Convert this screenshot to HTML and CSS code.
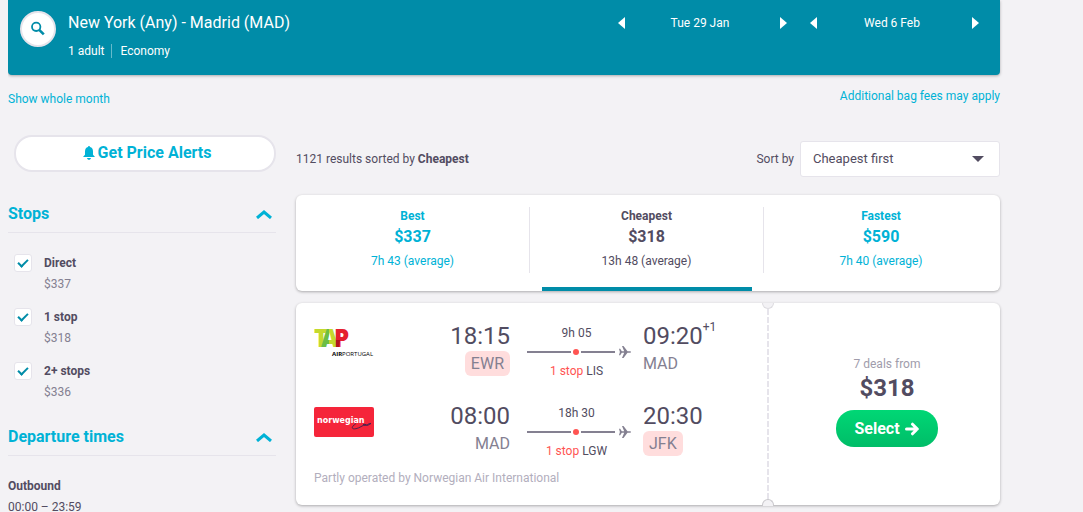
FILE: index.html
```html
<!DOCTYPE html>
<html lang="en">
<head>
    <meta charset="UTF-8">
    <meta name="viewport" content="width=device-width, initial-scale=1.0">
    <title>New York (Any) - Madrid (MAD)</title>
    <link rel="stylesheet" href="styles.css">
</head>
<body>
    <div class="page">
        <header class="search-bar">
            <button class="search-button" type="button" aria-label="Edit search">
                <svg width="18" height="18" viewBox="0 0 18 18" fill="none" stroke="currentColor">
                    <circle cx="7.2" cy="6.8" r="4.2" stroke-width="1.8"/>
                    <path d="M10.2 9.8l4.6 4.6" stroke-width="2.6"/>
                </svg>
            </button>
            <div class="search-summary">
                <h1>New York (Any) - Madrid (MAD)</h1>
                <p><span>1 adult</span><span class="cabin">Economy</span></p>
            </div>
            <div class="dates">
                <div class="date">
                    <button type="button" aria-label="Previous departure day"><svg width="18" height="18" viewBox="0 0 18 18"><path d="M13 3v12L6 9z"/></svg></button>
                    <span>Tue 29 Jan</span>
                    <button type="button" aria-label="Next departure day"><svg width="18" height="18" viewBox="0 0 18 18"><path d="M10 3v12l7-6z"/></svg></button>
                </div>
                <div class="date">
                    <button type="button" aria-label="Previous return day"><svg width="18" height="18" viewBox="0 0 18 18"><path d="M13 3v12L6 9z"/></svg></button>
                    <span>Wed 6 Feb</span>
                    <button type="button" aria-label="Next return day"><svg width="18" height="18" viewBox="0 0 18 18"><path d="M10 3v12l7-6z"/></svg></button>
                </div>
            </div>
        </header>

        <div class="links">
            <a class="month-link" href="#">Show whole month</a>
            <a href="#">Additional bag fees may apply</a>
        </div>

        <div class="columns">
            <aside class="sidebar">
                <button class="alerts" type="button">
                    <svg width="12" height="14" viewBox="0 0 12 14" fill="currentColor"><path d="M6 0a1 1 0 0 1 1 1.1C9 1.6 10 3.300 10 5.500v3.300l2 2.200H0l2-2.200V5.500C2 3.300 3 1.600 5 1.100A1 1 0 0 1 6 0zM4 12h4c-.2 1.200-1 1.800-2 1.800S4.200 13.200 4 12z"/></svg>
                    Get Price Alerts
                </button>

                <section class="filter">
                    <h2>
                        <button type="button">Stops
                            <svg width="16" height="10" viewBox="0 0 16 10"><path d="M1 9l7-6 7 6"/></svg>
                        </button>
                    </h2>
                    <div class="options">
                        <div class="option">
                            <input type="checkbox" id="direct" checked>
                            <label for="direct">Direct <span>$337</span></label>
                        </div>
                        <div class="option">
                            <input type="checkbox" id="one-stop" checked>
                            <label for="one-stop">1 stop <span>$318</span></label>
                        </div>
                        <div class="option">
                            <input type="checkbox" id="two-stops" checked>
                            <label for="two-stops">2+ stops <span>$336</span></label>
                        </div>
                    </div>
                </section>

                <section class="filter">
                    <h2>
                        <button type="button">Departure times
                            <svg width="16" height="10" viewBox="0 0 16 10"><path d="M1 9l7-6 7 6"/></svg>
                        </button>
                    </h2>
                    <div class="times">
                        <h3>Outbound</h3>
                        <p>00:00 – 23:59</p>
                    </div>
                </section>
            </aside>

            <main class="results">
                <div class="toolbar">
                    <p>1121 results sorted by <strong>Cheapest</strong></p>
                    <div class="sort">
                        <label for="sort">Sort by</label>
                        <div class="select">
                            <select id="sort">
                                <option>Cheapest first</option>
                                <option>Fastest first</option>
                            </select>
                        </div>
                    </div>
                </div>

                <div class="tabs">
                    <button type="button">
                        <span class="tab-name">Best</span>
                        <span class="tab-price">$337</span>
                        <span class="tab-time">7h 43 (average)</span>
                    </button>
                    <button class="active" type="button">
                        <span class="tab-name">Cheapest</span>
                        <span class="tab-price">$318</span>
                        <span class="tab-time">13h 48 (average)</span>
                    </button>
                    <button type="button">
                        <span class="tab-name">Fastest</span>
                        <span class="tab-price">$590</span>
                        <span class="tab-time">7h 40 (average)</span>
                    </button>
                </div>

                <article class="ticket">
                    <div class="legs">
                        <div class="leg">
                            <div class="logo">
                                <svg width="60" height="30" viewBox="0 0 60 30" role="img" aria-label="TAP Air Portugal">
                                    <defs>
                                        <linearGradient id="tap-a">
                                            <stop offset="0.45" stop-color="#6cbe45"/>
                                            <stop offset="0.45" stop-color="#c4d92e"/>
                                        </linearGradient>
                                    </defs>
                                    <text class="tap" x="0" y="20" fill="#c4d92e">T</text>
                                    <text class="tap" x="7" y="20" fill="url(#tap-a)">A</text>
                                    <text class="tap" x="20" y="20" fill="#e5202e">P</text>
                                    <path d="M22 13h4l-1 7h-3z" fill="#b0151f"/>
                                    <text class="tap-small" x="18" y="29"><tspan font-weight="700">AIR</tspan>PORTUGAL</text>
                                </svg>
                            </div>
                            <div class="place depart">
                                <span class="time">18:15</span>
                                <span class="code changed">EWR</span>
                            </div>
                            <div class="route">
                                <span>9h 05</span>
                                <div class="track">
                                    <i class="line"></i><i class="dot"></i><i class="line"></i>
                                    <svg class="plane" width="12" height="12" viewBox="0 0 12 12"><path d="M0 2.800h1.200L2.800 5.200h2.400L3 0h1.500l4 5.200h2.300c1.600 0 1.600 1.600 0 1.600H8.500l-4 5.200H3l2.200-5.200H2.800L1.200 9.200H0L.9 6z"/></svg>
                                </div>
                                <span><em>1 stop</em> LIS</span>
                            </div>
                            <div class="place">
                                <span class="time">09:20<sup>+1</sup></span>
                                <span class="code">MAD</span>
                            </div>
                        </div>

                        <div class="leg">
                            <div class="logo">
                                <svg width="60" height="30" viewBox="0 0 60 30" role="img" aria-label="Norwegian">
                                    <rect width="60" height="30" rx="2" fill="#f5253a"/>
                                    <text class="norwegian" x="3" y="16">norwegian</text>
                                    <path d="M42 16.500c-5 3.500-5 6 0 5.200 4-.8 6-3.300 10-4.200M49 17.500c2-.8 3 .8 4.500 0s2-1.200 3.500-1l-3 1.700c-2 .6-3.500.2-5-.7z" fill="none" stroke="#3a2450" stroke-width="0.900"/>
                                </svg>
                            </div>
                            <div class="place depart">
                                <span class="time">08:00</span>
                                <span class="code">MAD</span>
                            </div>
                            <div class="route">
                                <span>18h 30</span>
                                <div class="track">
                                    <i class="line"></i><i class="dot"></i><i class="line"></i>
                                    <svg class="plane" width="12" height="12" viewBox="0 0 12 12"><path d="M0 2.800h1.200L2.800 5.200h2.400L3 0h1.500l4 5.200h2.300c1.600 0 1.600 1.600 0 1.600H8.500l-4 5.200H3l2.200-5.200H2.800L1.200 9.200H0L.9 6z"/></svg>
                                </div>
                                <span><em>1 stop</em> LGW</span>
                            </div>
                            <div class="place">
                                <span class="time">20:30</span>
                                <span class="code changed">JFK</span>
                            </div>
                        </div>
                        <p class="operator">Partly operated by Norwegian Air International</p>
                    </div>

                    <div class="deal">
                        <span class="deal-count">7 deals from</span>
                        <span class="deal-price">$318</span>
                        <button class="select-button" type="button">
                            Select
                            <svg width="14" height="14" viewBox="0 0 14 14"><path d="M1.500 7H12M7.500 2.200L12.300 7l-4.800 4.800"/></svg>
                        </button>
                    </div>
                </article>
            </main>
        </div>
    </div>
</body>
</html>
```
FILE: styles.css
```css
*, *::before, *::after {
    box-sizing: border-box;
}
body {
    margin: 0 8px;
    background-color: #f3f2f5;
    color: #524c61;
    font-family: Roboto, "Liberation Sans", sans-serif;
    font-size: 12px;
    line-height: 18px;
}
h1, h2, h3, p {
    margin: 0;
    font-size: inherit;
}
button, select {
    font: inherit;
    color: inherit;
    cursor: pointer;
}
button {
    padding: 0;
    border: none;
    background: none;
}
a {
    color: #00b2d6;
    text-decoration: none;
}
.page {
    max-width: 992px;
}

/* search header */
.search-bar {
    display: flex;
    align-items: flex-start;
    gap: 12px;
    padding: 11px 12px 15px;
    border-radius: 0 0 4px 4px;
    background-color: #008ca8;
    box-shadow: 0 1px 3px rgba(0, 0, 0, 0.3);
    color: white;
}
.search-button {
    display: flex;
    align-items: center;
    justify-content: center;
    width: 36px;
    height: 36px;
    border: 2px solid #e6e4eb;
    border-radius: 50%;
    background-color: white;
    color: #008ca8;
}
.search-summary {
    flex: 1;
}
.search-summary h1 {
    padding-bottom: 7px;
    font-size: 16px;
    font-weight: 400;
    line-height: 24px;
}
.cabin {
    margin-left: 7px;
    padding-left: 8px;
    border-left: 1px solid #66bacb;
}
.dates {
    display: flex;
    line-height: 24px;
}
.date {
    display: flex;
    align-items: center;
    justify-content: space-between;
    width: 192px;
    padding: 0 8px;
}
.date svg {
    display: block;
    fill: white;
}

.links {
    display: flex;
    justify-content: space-between;
    padding: 12px 0 24px;
}
.month-link {
    line-height: 24px;
}

.columns {
    display: flex;
    gap: 20px;
}

/* filters */
.sidebar {
    display: flex;
    flex-direction: column;
    flex: 0 0 268px;
}
.alerts {
    display: flex;
    align-items: center;
    justify-content: center;
    gap: 3px;
    height: 37px;
    margin: 0 0 30px 6px;
    padding: 0 0 2px 4px;
    border: 2px solid #e6e4eb;
    border-radius: 18px;
    background-color: white;
    color: #00b2d6;
    font-size: 16px;
    font-weight: 700;
}
.filter h2 {
    padding-bottom: 6px;
    border-bottom: 1px solid #e6e4eb;
}
.filter h2 button {
    display: flex;
    align-items: center;
    justify-content: space-between;
    width: 100%;
    padding-right: 4px;
    color: #00b2d6;
    font-size: 16px;
    font-weight: 700;
    line-height: 24px;
}
.filter h2 path {
    fill: none;
    stroke: currentColor;
    stroke-width: 3;
}
.options {
    display: flex;
    flex-direction: column;
    gap: 12px;
    padding: 21px 6px;
}
.option {
    display: flex;
    gap: 12px;
}
.option input {
    appearance: none;
    position: relative;
    width: 18px;
    height: 18px;
    margin: 0;
    border: 1px solid #e6e4eb;
    border-radius: 3px;
    background-color: white;
}
.option input:checked::after {
    content: "";
    position: absolute;
    top: 2px;
    left: 5px;
    width: 6px;
    height: 10px;
    border: solid #008ca8;
    border-width: 0 2px 2px 0;
    transform: rotate(45deg);
}
.option label {
    font-weight: 700;
}
.option label span {
    display: block;
    color: #848091;
    font-weight: 400;
    line-height: 24px;
}
.times {
    padding: 21px 0;
}
.times p {
    line-height: 24px;
}

/* results */
.results {
    flex: 1;
    min-width: 0;
    padding: 6px 0 12px;
}
.toolbar, .sort {
    display: flex;
    align-items: center;
    justify-content: space-between;
}
.sort {
    gap: 6px;
}
.select {
    position: relative;
}
.select::after {
    content: "";
    position: absolute;
    top: 15px;
    right: 16px;
    border: 6px solid transparent;
    border-top-color: #524c61;
    border-bottom: none;
    pointer-events: none;
}
.select select {
    appearance: none;
    display: block;
    width: 200px;
    height: 36px;
    padding: 0 12px;
    border: 1px solid #e6e4eb;
    border-radius: 3px;
    background-color: white;
    font-size: 13px;
}
.tabs, .ticket {
    display: flex;
    border-radius: 6px;
    background-color: white;
    box-shadow: 0 1px 3px rgba(0, 0, 0, 0.3);
}
.tabs {
    margin: 18px 0 12px;
    padding: 12px 2px 0 0;
}
.tabs button {
    position: relative;
    flex: 1;
    padding-bottom: 18px;
    color: #00b2d6;
}
.tabs span {
    display: block;
    border-right: 1px solid #e6e4eb;
    line-height: 24px;
}
.tabs button:last-child span {
    border-right: none;
}
.tabs .active {
    color: #524c61;
}
.tabs .active::after {
    content: "";
    position: absolute;
    right: 12px;
    bottom: 0;
    left: 12px;
    height: 4px;
    background-color: #008ca8;
}
.tabs .tab-name {
    font-weight: 700;
    line-height: 18px;
}
.tab-price {
    font-size: 16px;
    font-weight: 700;
}

/* ticket */
.ticket {
    position: relative;
}
.legs {
    flex: 1;
    padding: 18px;
}
.leg {
    display: grid;
    grid-template-columns: 1fr auto 109px 107px;
    column-gap: 12px;
    margin-bottom: 21px;
}
.logo {
    padding-top: 6px;
}
.logo svg {
    display: block;
}
.tap {
    font: 800 24px "Open Sans", sans-serif;
}
.tap-small {
    font: 400 6px "Open Sans", sans-serif;
}
.norwegian {
    fill: white;
    font: 700 8px "DejaVu Sans", sans-serif;
}
.place {
    display: flex;
    flex-direction: column;
    align-items: flex-start;
}
.depart {
    align-items: flex-end;
}
.time {
    font-size: 24px;
    line-height: 30px;
}
.time sup {
    font-size: 12px;
    line-height: 12px;
    vertical-align: 13px;
}
.code {
    color: #848091;
    font-size: 16px;
    line-height: 25px;
}
.changed {
    padding: 0 6px;
    border-radius: 6px;
    background-color: #ffdddd;
}
.route {
    display: flex;
    flex-direction: column;
    padding-top: 3px;
    text-align: center;
}
.route em {
    color: #ff5452;
    font-style: normal;
}
.track {
    display: flex;
    align-items: center;
    gap: 2px;
    height: 20px;
    padding-left: 5px;
}
.line {
    width: 44px;
    height: 2px;
    background-color: #848091;
}
.dot + .line {
    width: 34px;
}
.dot {
    width: 6px;
    height: 6px;
    border-radius: 50%;
    background-color: #ff5452;
}
.plane {
    margin-left: auto;
    fill: #848091;
}
.operator {
    margin-top: -12px;
    color: #b2aebd;
}
.deal {
    display: flex;
    flex-direction: column;
    align-items: center;
    justify-content: center;
    flex: 0 0 232px;
    padding: 0 0 6px 6px;
}
/* tear-off edge between the two parts */
.ticket::before {
    content: "";
    position: absolute;
    top: 6px;
    right: 231px;
    bottom: 6px;
    width: 2px;
    background: repeating-linear-gradient(#e6e4eb 0 6px, white 6px 8px);
}
.legs::before, .legs::after {
    content: "";
    position: absolute;
    right: 226px;
    width: 12px;
    height: 6px;
    background-color: #f3f2f5;
}
.legs::before {
    top: 0;
    border: 1px solid #dddce0;
    border-top: none;
    border-radius: 0 0 6px 6px;
}
.legs::after {
    bottom: -1px;
    height: 7px;
    border: 1px solid #c8c7cb;
    border-bottom: none;
    border-radius: 6px 6px 0 0;
}
.deal-count {
    color: #a09cab;
}
.deal-price {
    margin-bottom: 7px;
    font-size: 24px;
    font-weight: 700;
    line-height: 30px;
}
.select-button {
    display: flex;
    align-items: center;
    gap: 5px;
    height: 37px;
    padding: 0 19px 0 18px;
    border-radius: 18px;
    background-image: linear-gradient(#00d775, #00bd68);
    color: white;
    font-size: 16px;
    font-weight: 700;
}
.select-button path {
    fill: none;
    stroke: currentColor;
    stroke-width: 3;
    stroke-linecap: round;
    stroke-linejoin: round;
}
```
